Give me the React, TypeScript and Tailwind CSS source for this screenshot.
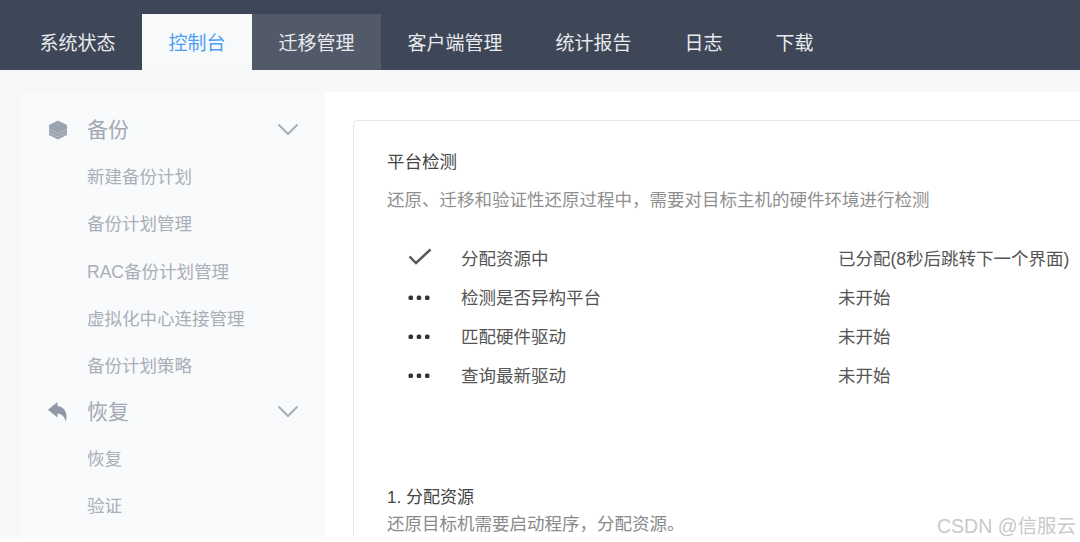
import React from 'react';

const tabs = ['系统状态', '控制台', '迁移管理', '客户端管理', '统计报告', '日志', '下载'];

const checks = [
  { name: '分配资源中', status: '已分配(8秒后跳转下一个界面)', done: true },
  { name: '检测是否异构平台', status: '未开始', done: false },
  { name: '匹配硬件驱动', status: '未开始', done: false },
  { name: '查询最新驱动', status: '未开始', done: false },
];

const LayersIcon = () => (
  <svg width="20" height="20" viewBox="0 0 20 20" className="text-[#9aa3b0]">
    <path d="M10 .5 19 5v10l-9 4.5L1 15V5Z" fill="currentColor" />
    <path d="M1 9.2 10 13.6l9-4.4M1 12.6 10 17l9-4.4" fill="none" stroke="#b9c0ca" strokeWidth="0.8" />
  </svg>
);

const ReplyIcon = () => (
  <svg width="20" height="20" viewBox="0 0 20 20" className="text-[#8f98a6]">
    <path d="M9.5 0 0 7.8 9.5 15.5v-4c4 .2 6.6 2.6 8.5 8 2-9-1.600-14.700-8.500-15.500Z" fill="currentColor" />
  </svg>
);

const Chevron = () => (
  <svg width="22" height="13" viewBox="0 0 22 13" className="text-[#a9afb9]">
    <path d="M1.5 1.5 11 11l9.5-9.5" fill="none" stroke="currentColor" strokeWidth="2" />
  </svg>
);

const Dots = () => (
  <svg width="22" height="6" viewBox="0 0 22 6" className="-mt-[2px] text-[#333]">
    <rect x="0.5" y="0.5" width="4.5" height="4.5" rx="1.6" fill="currentColor" />
    <rect x="8.7" y="0.5" width="4.5" height="4.5" rx="1.6" fill="currentColor" />
    <rect x="17" y="0.5" width="4.5" height="4.5" rx="1.6" fill="currentColor" />
  </svg>
);

const CheckMark = () => (
  <svg width="24" height="18" viewBox="0 0 24 18" className="-mt-[6px] text-[#555]">
    <path d="M1.5 8.5 8 15 22.5 1.5" fill="none" stroke="currentColor" strokeWidth="2.4" />
  </svg>
);

const SideGroup = ({
  icon,
  title,
  items,
}: {
  icon: React.ReactNode;
  title: string;
  items: string[];
}) => (
  <div>
    <div className="flex h-[47.5px] items-center pl-[28px] pr-[26px]">
      <span className="flex w-[39px] items-center">{icon}</span>
      <span className="flex-1 text-[21px] text-[#a3a9b3]">{title}</span>
      <Chevron />
    </div>
    {items.map((item) => (
      <div key={item} className="flex h-[47.25px] items-center pl-[67px] text-[17.5px] text-[#a9aeb7]">
        {item}
      </div>
    ))}
  </div>
);

export default function App() {
  return (
    <div
      className="relative flex h-[542px] w-[1080px] flex-col overflow-hidden bg-[#f6f7f8]"
      style={{ fontFamily: '"Liberation Sans", "Noto Sans CJK SC", sans-serif' }}
    >
      <div className="flex h-[70px] shrink-0 items-end bg-[#3e4757] pl-[13px]">
        {tabs.map((tab, i) => (
          <div
            key={tab}
            className={
              i === 1
                ? 'flex h-[56px] items-center bg-[#f8f9fa] px-[26.5px] pt-[5px] text-[19px] text-[#4a9ff5]'
                : i === 2
                  ? 'flex h-[56px] items-center bg-[#525a69] px-[26.5px] pt-[5px] text-[19px] text-[#e8eaed]'
                  : 'flex h-[56px] items-center px-[26.5px] pt-[5px] text-[19px] text-[#e8eaed]'
            }
          >
            {tab}
          </div>
        ))}
      </div>

      <div className="mt-[22px] flex h-[445px] shrink-0 pl-[20px]">
        <div className="w-[305px] shrink-0 bg-[#f8fafc] pt-[14px]">
          <SideGroup
            icon={<LayersIcon />}
            title="备份"
            items={['新建备份计划', '备份计划管理', 'RAC备份计划管理', '虚拟化中心连接管理', '备份计划策略']}
          />
          <div className="-mt-[1.75px]">
            <SideGroup icon={<ReplyIcon />} title="恢复" items={['恢复', '验证']} />
          </div>
        </div>

        <div className="flex-1 bg-white pl-[28px] pt-[28px]">
          <div className="h-[500px] w-[800px] rounded-[4px] border border-[#e8e9eb] pl-[33px] pt-[28px]">
            <div className="text-[17.5px] leading-[26px] text-[#444]">平台检测</div>
            <div className="mt-[12px] text-[17.5px] leading-[26px] text-[#8f8f8f]">
              {'还原、迁移和验证性还原过程中\uFF0C需要对目标主机的硬件环境进行检测'}
            </div>
            <div className="mt-[27px]">
              {checks.map((row) => (
                <div key={row.name} className="flex h-[39px] items-center text-[17.5px] text-[#555]">
                  <span className="flex w-[74px] items-center pl-[21px]">
                    {row.done ? <CheckMark /> : <Dots />}
                  </span>
                  <span className="w-[377px]">{row.name}</span>
                  <span className="whitespace-nowrap">{row.status}</span>
                </div>
              ))}
            </div>
            <div className="mt-[89px] text-[17px] leading-[26px] text-[#444]">1. 分配资源</div>
            <div className="text-[17.5px] leading-[27px] text-[#8a8a8a]">
              {'还原目标机需要启动程序\uFF0C分配资源。'}
            </div>
          </div>
        </div>
      </div>

      <div className="flex-1 bg-white" />

      <div className="absolute bottom-[4px] right-[4px] text-[19.5px] leading-[24px] text-[#c9c9c9]">CSDN @信服云</div>
    </div>
  );
}
